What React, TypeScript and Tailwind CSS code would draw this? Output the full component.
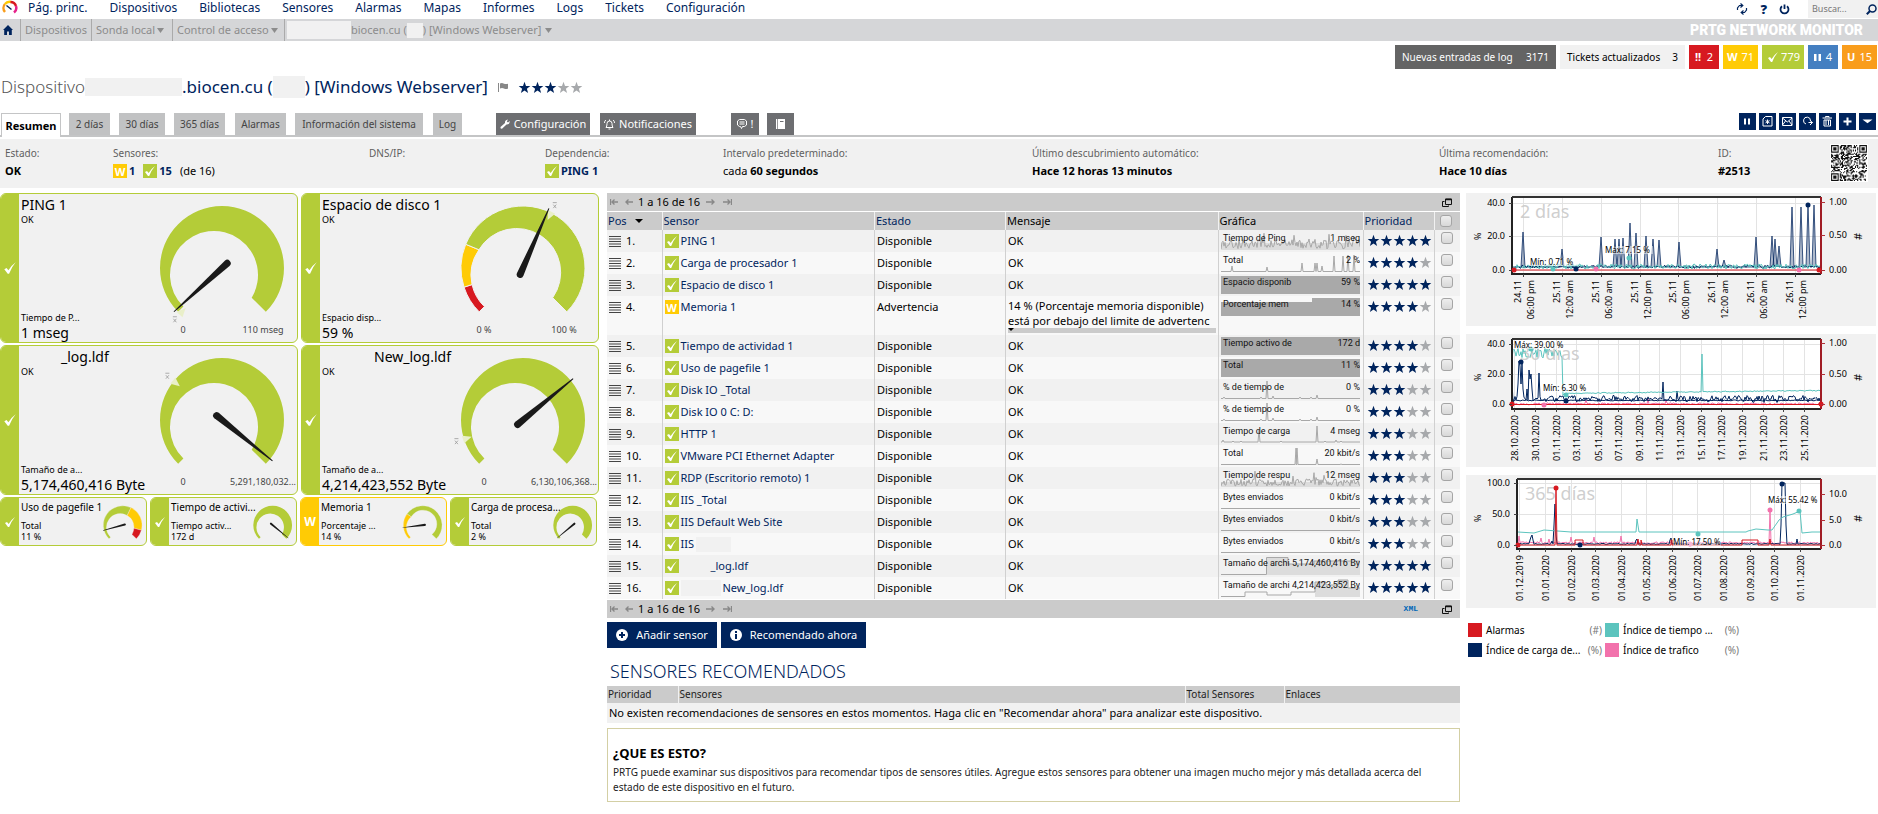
import React from 'react';

const NAVY = '#00245d';
const GREEN = '#b4cc38';
const YELLOW = '#ffcb05';
const RED = '#d71920';
const TEAL = '#5cc4be';
const PINK = '#f272ac';

// repeatable pseudo random numbers for the noisy series
const makeNoise = (seed: number) => {
    let s = seed;
    return () => {
        s = (s * 16807) % 2147483647;
        return s / 2147483647;
    };
};

/* ---------- icons ---------- */

const Check = ({ className }: { className: string }) => (
    <svg viewBox="0 0 14 14" className={className} aria-hidden="true">
        <path d="M2 8 L4 7 L5.6 9 Q8 5 12 2 Q8.500 6 6.200 12 L5 12 Z" fill="#fff" />
    </svg>
);

const StatusIcon = ({ warn }: { warn?: boolean }) =>
    warn ? (
        <span className="inline-flex size-3.5 shrink-0 items-center justify-center bg-[#ffcb05] text-[11px] leading-none font-bold text-white">W</span>
    ) : (
        <span className="inline-flex size-3.5 shrink-0 items-center justify-center bg-[#b4cc38]">
            <Check className="size-3.5" />
        </span>
    );

const Stars = ({ count }: { count: number }) => (
    <svg viewBox="0 0 65 13" className="block h-[13px] w-[65px] shrink-0" role="img" aria-label={`Prioridad ${count}`}>
        {[0, 1, 2, 3, 4].map((i) => (
            <path
                key={i}
                transform={`translate(${i * 13} 0)`}
                d="M6.500 0.800 L8 4.900 L12.300 5 L8.900 7.700 L10.100 11.900 L6.500 9.400 L2.900 11.900 L4.100 7.700 L0.700 5 L5 4.900 Z"
                fill={i < count ? NAVY : '#a7a9ac'}
            />
        ))}
    </svg>
);

const Caret = ({ className }: { className: string }) => (
    <svg viewBox="0 0 8 5" preserveAspectRatio="none" className={className} aria-hidden="true">
        <path d="M0 0 H8 L4 5 Z" fill="currentColor" />
    </svg>
);

const WindowIcon = () => (
    <svg viewBox="0 0 10 9" className="h-[9px] w-2.5" fill="none" stroke="#111" aria-hidden="true">
        <path d="M3.500 1 H9.500 V6.500 H3.500 Z" />
        <path d="M3.500 1.500 H9.500" strokeWidth="1.500" />
        <path d="M2.500 3.500 H0.500 V8.500 H6.500 V7.500" />
    </svg>
);

const QrCode = () => {
    const rnd = makeNoise(77);
    const n = 33;
    const cells: string[] = [];
    const finder = (x: number, y: number) => {
        const d = Math.max(Math.abs(x - 3), Math.abs(y - 3));
        return d === 3 || d <= 1;
    };
    for (let y = 0; y < n; y++) {
        for (let x = 0; x < n; x++) {
            const v = rnd() > 0.5;
            let on = v;
            if (x < 8 && y < 8) on = x < 7 && y < 7 && finder(x, y);
            else if (x >= n - 8 && y < 8) on = x > n - 8 && y < 7 && finder(x - n + 7, y);
            else if (x < 8 && y >= n - 8) on = x < 7 && y > n - 8 && finder(x, y - n + 7);
            if (on) cells.push(`M${x} ${y}h1v1h-1z`);
        }
    }
    return (
        <svg viewBox="-1 -1 35 35" className="size-[38px] bg-white" role="img" aria-label="QR">
            <path d={cells.join('')} fill="#111" />
        </svg>
    );
};

/* ---------- header ---------- */

const menu = ['Pág. princ.', 'Dispositivos', 'Bibliotecas', 'Sensores', 'Alarmas', 'Mapas', 'Informes', 'Logs', 'Tickets', 'Configuración'];

const TopBar = () => (
    <header>
        <div className="flex h-[19px] items-start">
            <svg viewBox="0 0 16 14" className="ml-0.5 h-3.5 w-4" fill="none" strokeWidth="2.500" aria-hidden="true">
                <path d="M3 12 A6 6 0 0 1 3 4" stroke="#f99d1c" />
                <path d="M3 4 A6 6 0 0 1 9 2" stroke={YELLOW} />
                <path d="M8.500 2 A6 6 0 0 1 14 6" stroke={RED} />
                <path d="M14 6 A6 6 0 0 1 12 12.500" stroke="#e6218a" />
                <path d="M4.500 5.500 L9.500 9.500" stroke={NAVY} strokeWidth="1.500" />
            </svg>
            <nav className="ml-2.5 flex gap-[22px] text-[12px] leading-4 text-[#00245d]">
                {menu.map((m) => (
                    <a key={m} href="#" className="whitespace-nowrap">{m}</a>
                ))}
            </nav>
            <div className="ml-auto flex items-center text-[#00245d]">
                <button aria-label="Actualizar" className="mr-3">
                    <svg viewBox="0 0 12 12" className="size-3" fill="none" stroke="currentColor" strokeWidth="1.200">
                        <path d="M6.500 2.500 H3.500 L1.500 5 V7 M4.500 0.500 L6.800 2.500 L4.500 4.500" />
                        <path d="M5.500 9.500 H8.500 L10.500 7 V5 M7.500 7.500 L5.200 9.500 L7.500 11.500" />
                    </svg>
                </button>
                <button aria-label="Ayuda" className="mr-3 text-[13px] leading-4 font-black">?</button>
                <button aria-label="Salir" className="mr-[18px]">
                    <svg viewBox="0 0 11 11" className="size-[11px]" fill="none" stroke="currentColor" strokeWidth="1.800">
                        <path d="M3 2.300 A4 4 0 1 0 8 2.300 M5.500 0.500 V5" />
                    </svg>
                </button>
                <label className="flex h-[18px] items-center bg-[#f1f1f1] pr-px pl-1">
                    <input type="text" placeholder="Buscar..." aria-label="Buscar" className="w-[54px] bg-transparent text-[9px] leading-4 outline-none placeholder:text-[#777]" />
                    <svg viewBox="0 0 11 11" className="size-[11px]" fill="none" stroke="currentColor">
                        <circle cx="6.500" cy="4.500" r="3.500" strokeWidth="1.500" />
                        <path d="M4 7 L0.800 10.200" strokeWidth="2" />
                    </svg>
                </label>
            </div>
        </div>
        <div className="flex h-[22px] items-center bg-[#d5d6d8] text-[11px] leading-[22px] text-[#8c8c8c]">
            <a href="#" aria-label="Inicio" className="flex h-full w-[21px] items-center justify-center border-r border-[#aaa] pr-1 text-[#00245d]">
                <svg viewBox="0 0 10 10" className="size-2.5"><path d="M5 0 L10 5 H8.800 V10 H6 V6.500 H4 V10 H1.200 V5 H0 Z" fill="currentColor" /></svg>
            </a>
            <a href="#" className="h-full w-[71px] border-r border-[#aaa] pl-1">Dispositivos</a>
            <a href="#" className="flex h-full w-[81px] items-center gap-0.5 border-r border-[#aaa] pl-1 whitespace-nowrap">Sonda local<Caret className="h-[5px] w-[7px]" /></a>
            <a href="#" className="flex h-full w-[112px] items-center gap-0.5 border-r border-[#aaa] pl-1 whitespace-nowrap">Control de acceso<Caret className="h-[5px] w-[7px]" /></a>
            <a href="#" className="flex h-full items-center pl-0.5 whitespace-nowrap">
                <span className="h-[18px] w-16 bg-[#f1f1f1]" />biocen.cu (<span className="h-[15px] w-4 bg-[#f1f1f1]" />) [Windows Webserver]
                <Caret className="ml-1 h-[5px] w-[7px]" />
            </a>
            <span className="mr-[15px] ml-auto font-['Roboto',sans-serif] text-[14px] font-black whitespace-nowrap text-white">PRTG NETWORK MONITOR</span>
        </div>
    </header>
);

const Badges = () => (
    <div className="flex justify-end gap-1 pt-1 pr-px text-[10px] leading-6 whitespace-nowrap text-white">
        <a href="#" className="flex w-[161px] justify-between bg-[#646464] px-[7px]"><span>Nuevas entradas de log</span><span>3171</span></a>
        <a href="#" className="flex w-[125px] justify-between bg-[#f1f1f1] px-[7px] text-black"><span>Tickets actualizados</span><span>3</span></a>
        <a href="#" className="flex w-[30px] items-center justify-between bg-[#d71920] px-1.5 text-[11px]"><b>!!</b>2</a>
        <a href="#" className="flex w-[35px] items-center justify-between bg-[#ffcb05] px-1 text-[11px]"><b>W</b>71</a>
        <a href="#" className="flex w-[42px] items-center justify-between bg-[#b4cc38] px-1 text-[11px]"><Check className="size-3.5" />779</a>
        <a href="#" className="flex w-[30px] items-center justify-between bg-[#447fc1] px-1.5 text-[11px]">
            <svg viewBox="0 0 7 7" className="size-[7px]"><path d="M0 0h2.500v7H0zM4.500 0H7v7H4.500z" fill="#fff" /></svg>4
        </a>
        <a href="#" className="flex w-[35px] items-center justify-between bg-[#f99d1c] px-[5px] text-[11px]"><b>U</b>15</a>
    </div>
);

const Title = () => (
    <h1 className="flex h-9 items-center pl-px text-[17px] leading-6 whitespace-nowrap text-[#00245d]">
        <span className="w-[84px] font-light text-[#555]">Dispositivo</span>
        <span className="h-[18px] w-[97px] bg-[#f1f1f1]" />
        .biocen.cu (
        <span className="h-[22px] w-8 bg-[#f1f1f1]" />
        ) [Windows Webserver]
        <svg viewBox="0 0 10 9" className="mr-2.5 ml-2.5 h-[9px] w-2.5" aria-hidden="true">
            <path d="M0 0 H1 V9 H0 Z M2 0.500 Q4 -0.500 6 0.700 Q8 1.500 10 0.700 V5.500 Q8 6.500 6 5.500 Q4 4.500 2 5.500 Z" fill="#888" />
        </svg>
        <Stars count={3} />
    </h1>
);

const tabs = [
    { label: '2 días', cls: 'w-[41px] ml-2' },
    { label: '30 días', cls: 'w-[46px] ml-[9px]' },
    { label: '365 días', cls: 'w-[51px] ml-[9px]' },
    { label: 'Alarmas', cls: 'w-[51px] ml-[10px]' },
    { label: 'Información del sistema', cls: 'w-[128px] ml-[9px]' },
    { label: 'Log', cls: 'w-[29px] ml-[10px]' },
];

const tools = [
    { name: 'Pausar', d: 'M6 5.500 V11.500 M10 5.500 V11.500', w: 2 },
    { name: 'Buscar sensores', d: 'M6.500 3.500 H13 V13 H4 V6 Z M8.500 6.500 V11 M6.500 7.600 L10.500 9.900 M10.500 7.600 L6.500 9.900', w: 1 },
    { name: 'Correo', d: 'M3.500 4.500 H13 V12.500 H3.500 Z M3.500 5 L8.300 9 L13 5 M3.500 12 L6.500 8 M13 12 L10 8', w: 1 },
    { name: 'Informe', d: 'M7 11 A3.500 3.500 0 1 1 11.500 8 M9.500 9.500 H13.500 M11 7.500 L13.500 9.500 L11 12', w: 1 },
    { name: 'Borrar', d: 'M3.500 5 H13 M6.500 4.500 V3.500 H10 V4.500 M5 7 V13 H11.500 V7 Z M7 7 V12 M9.500 7 V12', w: 1 },
    { name: 'Agregar', d: 'M8.500 4.500 V12.500 M4.500 8.500 H12.500', w: 2 },
    { name: 'Más', d: 'M6.500 7.500 H10.500 L8.500 9 Z', w: 2 },
];

const Tabs = () => (
    <div className="mt-2 flex h-6 items-start border-b-2 border-[#c4c5c6] text-[10px] leading-[22px]">
        <button className="ml-px h-6 w-[60px] border border-b-0 border-[#c4c5c6] bg-white text-[11px] font-bold">Resumen</button>
        {tabs.map((t) => (
            <button key={t.label} className={`h-[22px] bg-[#c1c2c3] text-[#444] whitespace-nowrap ${t.cls}`}>{t.label}</button>
        ))}
        <button className="ml-[34px] flex h-[22px] w-[94px] items-center justify-center gap-1 bg-[#6d6e71] text-[11px] text-white">
            <svg viewBox="0 0 10 10" className="size-2.5 shrink-0"><path d="M0.500 8 L5 4 Q4.500 1 8 0.500 L6.800 2.500 L8 3.500 L9.700 2 Q10 5.500 6.500 5.500 L2 9.700 Q0 10 0.500 8 Z" fill="#fff" /></svg>
            Configuración
        </button>
        <button className="ml-2.5 flex h-[22px] w-24 items-center justify-center gap-1 bg-[#6d6e71] text-[11px] text-white">
            <svg viewBox="0 0 11 11" className="size-[11px] shrink-0" fill="none" stroke="#fff"><path d="M2 8.500 Q3 7.500 3 4.500 Q3 2 5.500 2 Q8 2 8 4.500 Q8 7.500 9 8.500 Z M4.500 10 H6.500 M5.500 0.500 V2 M0.500 4 Q0.500 2 1.800 1 M10.500 4 Q10.500 2 9.200 1" /></svg>
            Notificaciones
        </button>
        <button aria-label="Comentarios" className="ml-[35px] flex h-[22px] w-7 items-center justify-center gap-1 bg-[#6d6e71] text-[11px] text-white">
            <svg viewBox="0 0 10 10" className="size-2.5" fill="none" stroke="#fff"><path d="M5.500 7.500 L4.500 9.500 L3.500 7.500 H2.500 L0.500 6 V2 L2.500 0.500 H7.500 L9.500 2 V6 L7.500 7.500 Z M2.500 3 H7.500 M2.500 5 H7.500" /></svg>
            !
        </button>
        <button aria-label="Historial" className="ml-2 flex h-[22px] w-[27px] items-center justify-center bg-[#6d6e71]">
            <svg viewBox="0 0 9 10" className="h-2.5 w-[9px]"><path d="M2 0 H9 V10 H2 Z M0 0h1.300v10H0z" fill="#fff" /><path d="M4 2.500 H7.500" stroke="#6d6e71" /></svg>
        </button>
        <div className="mr-0.5 ml-auto flex gap-[3px]">
            {tools.map((t) => (
                <button key={t.name} aria-label={t.name} className="size-[17px] bg-[#00245d]">
                    <svg viewBox="0 0 17 17" className="size-[17px]" fill="none" stroke="#fff" strokeWidth={t.w}><path d={t.d} /></svg>
                </button>
            ))}
        </div>
    </div>
);

const InfoBand = () => (
    <dl className="mt-0.5 grid h-[49px] grid-cols-[108fr_256fr_176fr_178fr_309fr_407fr_279fr_112fr_48fr] bg-[#f1f1f1] pt-[5px] pl-[5px] text-[11px] leading-[18px] whitespace-nowrap [&_dt]:text-[10px] [&_dt]:text-[#5f5f5f]">
        <div><dt>Estado:</dt><dd className="font-bold">OK</dd></div>
        <div>
            <dt>Sensores:</dt>
            <dd className="flex items-center font-bold text-[#00245d]">
                <StatusIcon warn /><span className="mr-2 ml-0.5">1</span>
                <StatusIcon /><span className="mr-2 ml-0.5">15</span>
                <span className="font-normal text-black">(de 16)</span>
            </dd>
        </div>
        <div><dt>DNS/IP:</dt></div>
        <div>
            <dt>Dependencia:</dt>
            <dd className="flex items-center gap-0.5 font-bold text-[#00245d]"><StatusIcon /><a href="#">PING 1</a></dd>
        </div>
        <div><dt>Intervalo predeterminado:</dt><dd>cada <b>60 segundos</b></dd></div>
        <div><dt>Último descubrimiento automático:</dt><dd className="font-bold">Hace 12 horas 13 minutos</dd></div>
        <div><dt>Última recomendación:</dt><dd className="font-bold">Hace 10 días</dd></div>
        <div><dt>ID:</dt><dd className="font-bold">#2513</dd></div>
        <div><QrCode /></div>
    </dl>
);

/* ---------- gauges ---------- */

type Segment = { from: number; to: number; color: string };

const full: Segment[] = [{ from: 0, to: 1, color: GREEN }];

const dir = (t: number) => {
    const a = ((225 - 270 * t) * Math.PI) / 180;
    return [Math.cos(a), -Math.sin(a)];
};

// the hole of the ring is an off-centre circle, which thins the ring to the left
const innerPoint = (t: number) => {
    const [dx, dy] = dir(t);
    const b = -8 * dx + 7 * dy;
    const k = b + Math.sqrt(b * b - (64 + 49 - 44 * 44));
    return [k * dx, k * dy];
};

const ring = ({ from, to }: Segment) => {
    const [ax, ay] = dir(from);
    const [bx, by] = dir(to);
    const [cx, cy] = innerPoint(to);
    const [ex, ey] = innerPoint(from);
    const large = to - from > 0.62 ? 1 : 0;
    return `M${ax * 62} ${ay * 62} A62 62 0 ${large} 1 ${bx * 62} ${by * 62} L${cx} ${cy} A44 44 0 ${large} 0 ${ex} ${ey} Z`;
};

const Gauge = ({ value, mean, segments, className }: { value: number; mean?: number; segments: Segment[]; className: string }) => {
    const [nx, ny] = dir(value);
    const m = mean === undefined ? null : dir(mean);
    return (
        <svg viewBox="-72 -74 146 128" className={className} aria-hidden="true">
            {segments.map((s) => (
                <path key={s.from} d={ring(s)} fill={s.color} stroke={segments.length > 1 ? '#f1f1f1' : 'none'} />
            ))}
            {m && (
                <>
                    <path d={`M${m[0] * 54} ${m[1] * 54} L${m[0] * 63 - m[1] * 4} ${m[1] * 63 + m[0] * 4} L${m[0] * 63 + m[1] * 4} ${m[1] * 63 - m[0] * 4} Z`} fill="#e9efc9" />
                    <g transform={`translate(${m[0] * 70} ${m[1] * 70})`} stroke="#999" strokeWidth="0.800">
                        <path d="M-1.500 -1L1.500 2.500M1.500 -1L-1.500 2.500M-2 -3H2" />
                    </g>
                </>
            )}
            <path
                d={`M${-7 * nx - 3.5 * ny} ${-7 * ny + 3.5 * nx} A3.500 3.500 0 0 1 ${-7 * nx + 3.5 * ny} ${-7 * ny - 3.5 * nx} L${65 * nx + ny / 2} ${65 * ny - nx / 2} L${65 * nx - ny / 2} ${65 * ny + nx / 2} Z`}
                fill="#1a1a1a"
            />
        </svg>
    );
};

const bigGauges = [
    { name: 'PING 1', pad: '', channel: 'Tiempo de P...', value: '1 mseg', min: '0', max: '110 mseg', t: 0.01, mean: -0.01, segments: full },
    {
        name: 'Espacio de disco 1', pad: '', channel: 'Espacio disp...', value: '59 %', min: '0 %', max: '100 %', t: 0.587, mean: 0.6,
        segments: [{ from: 0, to: 0.1, color: RED }, { from: 0.1, to: 0.25, color: YELLOW }, { from: 0.25, to: 1, color: GREEN }],
    },
    { name: '_log.ldf', pad: 'pl-10', channel: 'Tamaño de a...', value: '5,174,460,416 Byte', min: '0', max: '5,291,180,032...', t: 0.978, mean: 0.31, segments: full },
    { name: 'New_log.ldf', pad: 'pl-[52px]', channel: 'Tamaño de a...', value: '4,214,423,552 Byte', min: '0', max: '6,130,106,368...', t: 0.687, mean: 0.1, segments: full },
];

const smallGauges = [
    {
        name: 'Uso de pagefile 1', channel: 'Total', value: '11 %', t: 0.11,
        segments: [{ from: 0, to: 0.594, color: GREEN }, { from: 0.594, to: 0.89, color: YELLOW }, { from: 0.89, to: 1, color: RED }],
    },
    { name: 'Tiempo de activi...', channel: 'Tiempo activ...', value: '172 d', t: 0.98, segments: full },
    { name: 'Memoria 1', warn: true, channel: 'Porcentaje ...', value: '14 %', t: 0.14, segments: [{ from: 0, to: 0.3, color: YELLOW }, { from: 0.3, to: 1, color: GREEN }] },
    { name: 'Carga de procesa...', channel: 'Total', value: '2 %', t: 0.02, segments: full },
];

const GaugePanel = () => (
    <section className="pr-0.5">
        <div className="grid grid-cols-2 gap-x-[3px] gap-y-0.5">
            {bigGauges.map((g) => (
                <article key={g.name} className="flex h-[150px] overflow-hidden rounded-md border border-[#b4cc38] bg-[#f1f1f1] whitespace-nowrap">
                    <div className="flex w-[18px] shrink-0 items-center justify-center bg-[#b4cc38]"><Check className="size-4" /></div>
                    <div className="flex w-[130px] shrink-0 flex-col pl-0.5">
                        <h2 className={`text-[14px] leading-[22px] ${g.pad}`}>{g.name}</h2>
                        <span className="text-[9px] leading-2">OK</span>
                        <span className="mt-auto text-[9px] leading-3">{g.channel}</span>
                        <span className="text-[14px] leading-[18px]">{g.value}</span>
                    </div>
                    <div className="mr-px ml-auto flex w-[146px] shrink-0 flex-col">
                        <Gauge value={g.t} mean={g.mean} segments={g.segments} className="block h-32 w-[146px] overflow-visible" />
                        <div className="flex justify-center gap-1 text-[9px] leading-4 text-[#444]">
                            <span className="w-[76px] shrink-0 text-center">{g.min}</span>
                            <span className="w-[76px] shrink-0 text-center">{g.max}</span>
                        </div>
                    </div>
                </article>
            ))}
        </div>
        <div className="mt-0.5 mr-0.5 grid grid-cols-4 gap-[3px]">
            {smallGauges.map((g) => (
                <article key={g.name} className={`flex h-[49px] overflow-hidden rounded-md border bg-[#f1f1f1] whitespace-nowrap ${g.warn ? 'border-[#ffcb05]' : 'border-[#b4cc38]'}`}>
                    <div className={`flex w-[18px] shrink-0 items-center justify-center text-[12px] font-bold text-white ${g.warn ? 'bg-[#ffcb05]' : 'bg-[#b4cc38]'}`}>
                        {g.warn ? 'W' : <Check className="size-3.5" />}
                    </div>
                    <div className="flex w-[78px] shrink-0 flex-col pl-0.5 text-[9px] leading-[11px]">
                        <h2 className="text-[10px] leading-[18px]">{g.name}</h2>
                        <span className="mt-1">{g.channel}</span>
                        <span>{g.value}</span>
                    </div>
                    <Gauge value={g.t} segments={g.segments} className="mt-1 ml-auto block h-10 w-[46px] shrink-0" />
                </article>
            ))}
        </div>
    </section>
);

/* ---------- sensor table ---------- */

type Spark = 'ping' | 'cpu' | 'full' | 'mem' | 'disk' | 'http' | 'net' | 'rdp' | 'flat' | 'log' | 'newlog';

type Sensor = { name: string; spark: Spark; label: string; value: string; stars: number; warn?: boolean };

const sensors: Sensor[] = [
    { name: 'PING 1', spark: 'ping', label: 'Tiempo de Ping', value: '1 mseg', stars: 5 },
    { name: 'Carga de procesador 1', spark: 'cpu', label: 'Total', value: '2 %', stars: 4 },
    { name: 'Espacio de disco 1', spark: 'full', label: 'Espacio disponib', value: '59 %', stars: 5 },
    { name: 'Memoria 1', spark: 'mem', label: 'Porcentaje mem', value: '14 %', stars: 4, warn: true },
    { name: 'Tiempo de actividad 1', spark: 'full', label: 'Tiempo activo de', value: '172 d', stars: 4 },
    { name: 'Uso de pagefile 1', spark: 'full', label: 'Total', value: '11 %', stars: 4 },
    { name: 'Disk IO _Total', spark: 'disk', label: '% de tiempo de', value: '0 %', stars: 3 },
    { name: 'Disk IO 0 C: D:', spark: 'disk', label: '% de tiempo de', value: '0 %', stars: 3 },
    { name: 'HTTP 1', spark: 'http', label: 'Tiempo de carga', value: '4 mseg', stars: 3 },
    { name: 'VMware PCI Ethernet Adapter', spark: 'net', label: 'Total', value: '20 kbit/s', stars: 3 },
    { name: 'RDP (Escritorio remoto) 1', spark: 'rdp', label: 'Tiempo de respu', value: '12 mseg', stars: 3 },
    { name: 'IIS _Total', spark: 'flat', label: 'Bytes enviados', value: '0 kbit/s', stars: 3 },
    { name: 'IIS Default Web Site', spark: 'flat', label: 'Bytes enviados', value: '0 kbit/s', stars: 3 },
    { name: 'IIS', spark: 'flat', label: 'Bytes enviados', value: '0 kbit/s', stars: 3 },
    { name: '_log.ldf', spark: 'log', label: 'Tamaño de archi', value: '5,174,460,416 By', stars: 5 },
    { name: 'New_log.ldf', spark: 'newlog', label: 'Tamaño de archi', value: '4,214,423,552 By', stars: 5 },
];

const noisyLine = (seed: number, low: number, amp: number, peaks: number[]) => {
    const rnd = makeNoise(seed);
    let d = '';
    for (let x = 0; x <= 139; x++) {
        const peak = peaks.includes(x) ? 8 : 0;
        d += `${x ? 'L' : 'M'}${x} ${Math.max(0, low - rnd() * amp - peak).toFixed(1)}`;
    }
    return d;
};

const spikes = (base: number, list: number[][]) =>
    `M0 ${base}` + list.map(([x, y]) => `L${x - 1} ${base}L${x} ${y}L${x + 1} ${base}`).join('') + `L139 ${base}`;

const sparkPath: Record<Spark, { line: string; fill: string }> = {
    ping: { line: noisyLine(5, 17, 10, [43, 73, 108, 117, 125, 133]), fill: 'M0 11H139V18H0Z' },
    cpu: { line: spikes(17.5, [[11, 12], [46, 13], [81, 9], [94, 9], [96, 9], [101, 12], [113, 2], [122, 2], [127, 1], [133, 1]]), fill: '' },
    full: { line: '', fill: 'M0 0H139V18H0Z' },
    mem: { line: '', fill: 'M0 4H91V0H139V18H0Z' },
    disk: { line: spikes(17.5, [[3, 16], [40, 16], [46, 0], [52, 15], [79, 16], [90, 16], [96, 14]]), fill: '' },
    http: { line: spikes(17, [[2, 15], [12, 16], [20, 16], [38, 5], [60, 16], [96, 1], [104, 16], [115, 15], [120, 16]]), fill: '' },
    net: { line: spikes(17.5, [[75, 1], [76, 1], [96, 12], [120, 17]]), fill: '' },
    rdp: { line: noisyLine(19, 17, 7, [34, 72, 93, 95, 103]), fill: 'M0 13H139V18H0Z' },
    flat: { line: 'M0 17.500H139', fill: '' },
    log: { line: 'M0 17.500H45.500V0.500H67V7H93V4H139', fill: 'M46 1H67V7H93V4H139V18H46Z' },
    newlog: { line: 'M0 17.500H24V13H46V16H70V13H94V3H105V6H117V1H127V9H139', fill: 'M94 3H105V6H117V1H127V9H139V18H94Z' },
};

const SparkCell = ({ s }: { s: Sensor }) => {
    const p = sparkPath[s.spark];
    const solid = s.spark === 'full' || s.spark === 'mem';
    return (
        <svg viewBox="0 0 139 18" className="block h-[18px] w-[139px] font-['Roboto',sans-serif]">
            <path d={p.fill} fill={solid ? '#a9a9a9' : '#dcdcdc'} />
            <path d={p.line} fill="none" stroke="#a8a8a8" />
            <text x="2" y="9" fontSize="9" fill="#111">{s.label}</text>
            <text x="139" y="9" fontSize="9" fill="#111" textAnchor="end">{s.value}</text>
        </svg>
    );
};

const Pager = ({ bottom }: { bottom?: boolean }) => (
    <div className="flex h-[18px] items-center gap-1 bg-[#cbcbcb] pl-[3px] text-[11px] leading-[18px]">
        <svg viewBox="0 0 24 8" className="h-2 w-6" fill="none" stroke="#888" aria-hidden="true">
            <path d="M0.500 1V7" strokeWidth="1.300" /><path d="M2 4H8M4.500 1.500L2 4L4.500 6.500M16 4H23M18.500 1.500L16 4L18.500 6.500" strokeWidth="1.400" />
        </svg>
        <span>1 a 16 de 16</span>
        <svg viewBox="0 0 26 8" className="ml-0.5 h-2 w-[26px]" fill="none" stroke="#888" aria-hidden="true">
            <path d="M25.500 1V7" strokeWidth="1.300" /><path d="M0 4H8M5.500 1.500L8 4L5.500 6.500M17 4H24M21.500 1.500L24 4L21.500 6.500" strokeWidth="1.400" />
        </svg>
        {bottom && <a href="#" className="ml-auto font-mono text-[8px] font-bold text-[#0067b8]">XML</a>}
        <button aria-label="Abrir en ventana" className={bottom ? 'mr-2 ml-5' : 'mr-2 ml-auto'}><WindowIcon /></button>
    </div>
);

const boxClass = 'block size-3 appearance-none rounded-[3px] border border-[#a5a5a5] bg-linear-to-b from-[#eeeeee] to-[#d8d8d8]';

const nameMask = (i: number) => {
    if (i === 14) return <span className="w-[28px]" />;
    if (i === 15) return <span className="h-4 w-[40px] bg-[#f1f1f1]" />;
    return null;
};

const SensorTable = () => (
    <div>
        <Pager />
        <table className="mt-px w-full table-fixed border-collapse text-left text-[11px] leading-[18px] whitespace-nowrap">
            <colgroup>
                <col className="w-[55px]" />
                <col />
                <col className="w-[131px]" />
                <col />
                <col className="w-[145px]" />
                <col className="w-[71px]" />
                <col className="w-[26px]" />
            </colgroup>
            <thead>
                <tr className="bg-[#cbcbcb] [&_th]:border-r [&_th]:border-[#f1f1f1] [&_th]:pl-px [&_th]:font-normal [&_th:last-child]:border-r-0">
                    <th><a href="#" className="flex items-center gap-2 text-[#00245d]">Pos<Caret className="h-1 w-2 text-black" /></a></th>
                    <th><a href="#" className="text-[#00245d]">Sensor</a></th>
                    <th><a href="#" className="text-[#00245d]">Estado</a></th>
                    <th>Mensaje</th>
                    <th>Gráfica</th>
                    <th><a href="#" className="text-[#00245d]">Prioridad</a></th>
                    <th><input type="checkbox" aria-label="Seleccionar todo" className={`ml-1 ${boxClass}`} /></th>
                </tr>
            </thead>
            <tbody>
                {sensors.map((s, i) => (
                    <tr key={i} className="h-[22px] align-top odd:bg-[#f1f1f1] even:bg-[#f8f8f8] [&_td]:border-r [&_td]:border-[#d0d0d0] [&_td]:py-0.5 [&_td]:pl-0.5 [&_td:last-child]:border-r-0">
                        <td>
                            <div className="flex items-center gap-[5px]">
                                <svg viewBox="0 0 12 11" className="h-[11px] w-3" stroke="#444" aria-hidden="true"><path d="M0 0.500H12M0 3H12M0 5.500H12M0 8H12M0 10.500H12" /></svg>
                                {i + 1}.
                            </div>
                        </td>
                        <td>
                            <div className="flex items-center gap-0.5">
                                <StatusIcon warn={s.warn} />
                                {nameMask(i)}
                                <a href="#" className="text-[#00245d]">{s.name}</a>
                                {i === 13 && <span className="h-[15px] w-[35px] bg-[#f1f1f1]" />}
                            </div>
                        </td>
                        <td>{s.warn ? 'Advertencia' : 'Disponible'}</td>
                        <td>
                            {s.warn ? (
                                <div className="pr-0.5">
                                    <p className="overflow-hidden leading-[15px]">14 % (Porcentaje memoria disponible)<br />está por debajo del limite de advertenc</p>
                                    <div className="h-[5px] bg-[#cbcbcb]"><Caret className="block h-[3px] w-1.5 text-black" /></div>
                                </div>
                            ) : (
                                'OK'
                            )}
                        </td>
                        <td><SparkCell s={s} /></td>
                        <td><div className="pt-0.5 pl-px"><Stars count={s.stars} /></div></td>
                        <td><input type="checkbox" aria-label={`Seleccionar ${s.name}`} className={`ml-1 ${boxClass}`} /></td>
                    </tr>
                ))}
            </tbody>
        </table>
        <div className="mt-px"><Pager bottom /></div>
    </div>
);

const Recommended = () => (
    <div>
        <div className="mt-1 flex gap-1 text-[11px] leading-[26px] text-white">
            <button className="flex w-[110px] items-center justify-center gap-2 bg-[#00245d] whitespace-nowrap">
                <svg viewBox="0 0 12 12" className="size-3"><circle cx="6" cy="6" r="6" fill="#fff" /><path d="M6 3V9M3 6H9" stroke={NAVY} strokeWidth="2" /></svg>
                Añadir sensor
            </button>
            <button className="flex w-[145px] items-center justify-center gap-2 bg-[#00245d] whitespace-nowrap">
                <svg viewBox="0 0 12 12" className="size-3"><circle cx="6" cy="6" r="6" fill="#fff" /><path d="M6 2V4M6 5V10" stroke={NAVY} strokeWidth="2" /></svg>
                Recomendado ahora
            </button>
        </div>
        <h2 className="mt-2.5 mb-0.5 pl-[3px] text-[18px] leading-[26px] font-light text-[#00245d]">SENSORES RECOMENDADOS</h2>
        <table className="w-full table-fixed border-collapse text-left text-[11px]">
            <colgroup>
                <col className="w-[71px]" />
                <col />
                <col className="w-[99px]" />
                <col className="w-[176px]" />
            </colgroup>
            <thead>
                <tr className="bg-[#cbcbcb] text-[10px] leading-[17px] text-[#222] [&_th]:border-r [&_th]:border-[#f1f1f1] [&_th]:pl-px [&_th]:font-normal [&_th:last-child]:border-r-0">
                    <th>Prioridad</th>
                    <th>Sensores</th>
                    <th>Total Sensores</th>
                    <th>Enlaces</th>
                </tr>
            </thead>
            <tbody>
                <tr className="bg-[#f1f1f1]">
                    <td colSpan={4} className="pl-0.5 leading-5">No existen recomendaciones de sensores en estos momentos. Haga clic en "Recomendar ahora" para analizar este dispositivo.</td>
                </tr>
            </tbody>
        </table>
        <div className="mt-[5px] border border-[#d3cfa4] px-[5px] pt-3.5 pb-1.5">
            <h3 className="text-[13px] leading-5 font-bold">¿QUE ES ESTO?</h3>
            <p className="mt-0.5 text-[10px] leading-[15px] text-[#222]">
                PRTG puede examinar sus dispositivos para recomendar tipos de sensores útiles. Agregue estos sensores para obtener una imagen mucho mejor y más detallada acerca del estado de este dispositivo en el futuro.
            </p>
        </div>
    </div>
);

/* ---------- history charts ---------- */

type Dot = [number, number, string];
type Tick = [string, number];
type Line = { d: string; color: string; fill?: string };
type ChartProps = {
    title: string; left: number; top: number; bottom: number;
    yTicks: Tick[]; rTicks: Tick[]; xTicks: string[][]; xs: number[];
    lines: Line[]; dots: Dot[]; notes: [string, number, number][];
};

const wiggle = (from: number, to: number, y: (x: number) => number, amp: number, seed: number, peaks: number[][] = []) => {
    const rnd = makeNoise(seed);
    let d = '';
    for (let x = from; x <= to; x++) {
        const near = peaks.find((p) => p[0] === x);
        const v = near ? near[1] : y(x) - (rnd() - 0.4) * amp;
        d += `${d ? 'L' : 'M'}${x} ${v.toFixed(1)}`;
    }
    return d;
};

const peaks2d = [
    [57, 39], [96, 56], [135, 44], [149, 46], [153, 46], [157, 45], [164, 30], [170, 40], [180, 43], [187, 46], [193, 47],
    [213, 49], [251, 56], [258, 67], [290, 44], [306, 43], [309, 46], [313, 53], [326, 14], [335, 14], [342, 12], [348, 12],
];

const peaks30 = [[46, 46], [52, 50], [53, 27], [54, 32], [55, 50], [56, 30], [57, 55], [61, 55], [63, 36], [64, 45], [65, 40], [66, 55], [73, 39], [197, 48], [211, 57]];

const charts: ChartProps[] = [
    {
        title: '2 días', left: 46, top: 4, bottom: 81,
        yTicks: [['40.0', 10], ['20.0', 43], ['0.0', 77]],
        rTicks: [['1.00', 9], ['0.50', 42], ['0.00', 77]],
        xTicks: [['24.11', '06:00 pm'], ['25.11', '12:00 am'], ['25.11', '06:00 am'], ['25.11', '12:00 pm'], ['25.11', '06:00 pm'], ['26.11', '12:00 am'], ['26.11', '06:00 am'], ['26.11', '12:00 pm']],
        xs: [57, 96, 135, 174, 212, 251, 290, 329],
        lines: [
            { d: 'M46 74' + peaks2d.map(([x, y]) => `L${x - 2} 74L${x} ${y}L${x + 2} 74`).join('') + 'L355 74', color: '#00245dc0', fill: '#00245d50' },
            { d: wiggle(47, 354, () => 74, 3, 31), color: NAVY },
            { d: wiggle(47, 354, () => 74, 5, 11), color: TEAL },
            { d: 'M46 77H355', color: RED },
        ],
        dots: [[87, 76, TEAL], [163, 65, TEAL], [110, 76, NAVY], [342, 12, NAVY], [130, 76, PINK], [333, 77, PINK], [48, 77, RED], [353, 77, RED]],
        notes: [['Mín: 0.71 %', 64, 72], ['Máx: 7.15 %', 139, 60]],
    },
    {
        title: '30 días', left: 46, top: 5, bottom: 75,
        yTicks: [['40.0', 10], ['20.0', 40], ['0.0', 70]],
        rTicks: [['1.00', 9], ['0.50', 40], ['0.00', 70]],
        xTicks: ['28.10', '30.10', '01.11', '03.11', '05.11', '07.11', '09.11', '11.11', '13.11', '15.11', '17.11', '19.11', '21.11', '23.11', '25.11'].map((d) => [`${d}.2020`]),
        xs: [48, 69, 90, 110, 132, 152, 173, 193, 214, 235, 255, 276, 297, 317, 338],
        lines: [
            { d: wiggle(46, 354, () => 70, 2, 3, [[99, 66], [120, 66], [182, 64], [200, 66]]), color: PINK },
            { d: wiggle(46, 354, (x) => (x % 11 > 3 ? 64.5 : 66.5), 5, 9, peaks30), color: NAVY },
            { d: wiggle(46, 354, () => 66.5, 1, 15), color: NAVY },
            { d: wiggle(46, 96, () => 20, 10, 21) + 'L97 61' + wiggle(98, 354, (x) => 60.500 - x / 90, 1, 8, [[236, 20]]).replace('M', 'L'), color: TEAL },
            { d: 'M46 70.500H355', color: RED },
        ],
        dots: [[65, 15, TEAL], [100, 61, TEAL], [55, 28, NAVY], [100, 67, NAVY], [78, 71, PINK], [46, 70, RED], [355, 70, RED]],
        notes: [['Máx: 39.00 %', 48, 14], ['Mín: 6.30 %', 77, 57]],
    },
    {
        title: '365 días', left: 51, top: 4, bottom: 74,
        yTicks: [['100.0', 8], ['50.0', 39], ['0.0', 70]],
        rTicks: [['10.0', 19], ['5.0', 45], ['0.0', 70]],
        xTicks: ['01.12.2019', '01.01.2020', '01.02.2020', '01.03.2020', '01.04.2020', '01.05.2020', '01.06.2020', '01.07.2020', '01.08.2020', '01.09.2020', '01.10.2020', '01.11.2020'].map((d) => [d]),
        xs: [53, 79, 105, 129, 155, 180, 206, 231, 257, 284, 308, 334],
        lines: [
            { d: wiggle(52, 354, () => 68, 2, 13, [[53, 61], [75, 63], [83, 64], [105, 62], [128, 62], [155, 61], [304, 35]]), color: PINK },
            { d: wiggle(52, 354, () => 69, 1, 17, [[64, 65], [65, 62], [66, 60], [67, 65], [86, 66], [88, 50], [89, 29], [90, 60], [170, 65], [171, 64], [204, 65], [205, 63], [315, 50], [316, 8], [317, 8], [318, 8], [319, 8], [320, 50], [331, 64]]), color: NAVY },
            { d: 'M52 57L68 58L78 55L105 57L170 57L171 44L173 57L280 57L282 56L290 54L302 55L306 55L311 48L313 45L317 42L327 39L334 36L336 58L346 57L355 57', color: TEAL },
            { d: 'M52 70H89L90 13L91 70H109V65H117V70H171L172 64L173 70H175V65L176 70H205V65H206V70H276V65H292V70H303L304 64L305 70H355', color: RED },
        ],
        dots: [[232, 59, TEAL], [333, 36, TEAL], [114, 70, NAVY], [316, 9, NAVY], [304, 35, PINK], [224, 69, PINK], [90, 13, RED], [52, 70, RED]],
        notes: [['Máx: 55.42 %', 302, 28], ['Mín: 17.50 %', 207, 70]],
    },
];

const Chart = ({ c }: { c: ChartProps }) => (
    <svg viewBox="0 0 410 133" className="block w-full bg-[#f1f1f1]" role="img" aria-label={c.title} fontSize="9">
        <rect x={c.left} y={c.top} width={355 - c.left} height={c.bottom - c.top} fill="#fff" />
        <path d={c.xs.map((x) => `M${x + 0.5} ${c.top}V${c.bottom}`).join('') + c.yTicks.map((t) => `M${c.left} ${t[1] + 0.5}H355`).join('')} stroke="#e3e3e3" />
        {c.lines.map((l, i) => (
            <path key={i} d={l.d} fill={l.fill ?? 'none'} stroke={l.color} />
        ))}
        <text x={c.left + 8} y={c.top + 21} fontSize="18" fill="#c9c9c9" fillOpacity="0.900">{c.title}</text>
        <path d={`M${c.left} ${c.top}V${c.bottom}H355`} fill="none" stroke="#222" strokeWidth="2" />
        <path d={`M${c.left} ${c.top}H355`} stroke="#333" strokeWidth="2" />
        <path d={`M355 ${c.top}V${c.bottom}`} stroke="#a01c24" strokeWidth="2" />
        {c.dots.map(([x, y, color], i) => (
            <circle key={i} cx={x} cy={y} r="2.500" fill={color} />
        ))}
        {c.notes.map(([t, x, y]) => (
            <g key={t}>
                <rect x={x} y={y - 7} width="48" height="8" fill="#fff" fillOpacity="0.500" />
                <text x={x} y={y} fontSize="8">{t}</text>
            </g>
        ))}
        {c.yTicks.map(([t, y]) => (
            <g key={t}><path d={`M${c.left - 3} ${y + 0.5}H${c.left}`} stroke="#444" /><text x={c.left - 7} y={y + 3} textAnchor="end">{t}</text></g>
        ))}
        {c.rTicks.map(([t, y]) => (
            <g key={t}><path d={`M355 ${y + 0.5}H359`} stroke="#b03038" /><text x="363" y={y + 3}>{t}</text></g>
        ))}
        {c.xTicks.map((rows, i) => (
            <g key={i}>
                <path d={`M${c.xs[i] + 0.5} ${c.bottom}V${c.bottom + 3}`} stroke="#444" />
                {rows.map((r, k) => (
                    <text key={r} transform={`translate(${c.xs[i] + (rows.length > 1 ? -2 : 4) + k * 13} ${c.bottom + 6}) rotate(-90)`} textAnchor="end">{r}</text>
                ))}
            </g>
        ))}
        <text transform="translate(15 47) rotate(-90)">%</text>
        <text transform="translate(396 47) rotate(-90)" fontSize="11">#</text>
    </svg>
);

const legend = [
    { name: 'Alarmas', unit: '(#)', cls: 'bg-[#d71920]' },
    { name: 'Índice de tiempo ...', unit: '(%)', cls: 'bg-[#5cc4be]' },
    { name: 'Índice de carga de...', unit: '(%)', cls: 'bg-[#00245d]' },
    { name: 'Índice de trafico', unit: '(%)', cls: 'bg-[#f272ac]' },
];

const ChartPanel = () => (
    <section>
        <div className="flex flex-col gap-2">
            {charts.map((c) => (
                <Chart key={c.title} c={c} />
            ))}
        </div>
        <ul className="mt-3 grid grid-cols-[134px_134px] gap-x-[3px] pl-0.5 text-[10px] leading-5 whitespace-nowrap">
            {legend.map((l) => (
                <li key={l.name} className="flex items-center">
                    <span className={`mr-1 size-3.5 ${l.cls}`} />
                    {l.name}
                    <span className="ml-auto text-[#777]">{l.unit}</span>
                </li>
            ))}
        </ul>
    </section>
);

const App: React.FC = () => {
    return (
        <div className="min-h-screen overflow-x-hidden bg-white font-['Noto_Sans','Open_Sans',sans-serif] text-black">
            <TopBar />
            <Badges />
            <Title />
            <Tabs />
            <InfoBand />
            <main className="mt-[5px] grid grid-cols-[601fr_853fr_410fr] items-start gap-x-1.5 pr-0.5">
                <GaugePanel />
                <section>
                    <SensorTable />
                    <Recommended />
                </section>
                <ChartPanel />
            </main>
        </div>
    );
};

export default App;
